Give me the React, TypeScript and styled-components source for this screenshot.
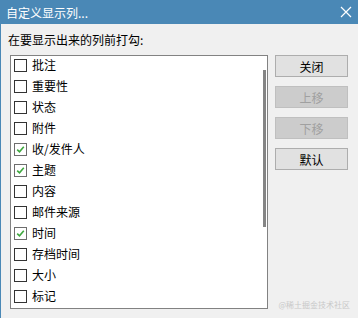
import React from "react";
import styled, { createGlobalStyle } from "styled-components";

const GlobalStyle = createGlobalStyle`
  html, body {
    margin: 0;
    padding: 0;
    background: #f0f0f0;
  }
  body {
    font-family: "Noto Sans CJK SC", "Noto Sans", "Liberation Sans", sans-serif;
    font-size: 12px;
  }
`;

const Window = styled.div`
  width: 358px;
  height: 318px;
  display: flex;
  flex-direction: column;
  background: #f0f0f0;
  overflow: hidden;
`;

const TitleBar = styled.div`
  height: 24px;
  flex: none;
  background: #4a88b6;
  color: #fff;
  display: flex;
  align-items: center;
  justify-content: space-between;
  padding: 0 6px 0 6px;
  font-size: 12px;
`;

const CloseIcon = styled.svg`
  width: 12px;
  height: 12px;
`;

const Body = styled.div`
  flex: 1;
  border-left: 1px solid #4a88b6;
  display: flex;
  flex-direction: column;
  position: relative;
`;

const Prompt = styled.div`
  margin: 8px 0 0 7px;
  height: 16px;
  line-height: 16px;
  color: #000;
`;

const Content = styled.div`
  display: flex;
  margin: 7px 0 0 9px;
  gap: 7px;
`;

const ListBox = styled.div`
  width: 258px;
  height: 254px;
  box-sizing: border-box;
  border: 1px solid #828282;
  background: #fff;
  display: flex;
`;

const Rows = styled.div`
  flex: 1;
  display: flex;
  flex-direction: column;
`;

const Row = styled.div`
  height: 21px;
  box-sizing: border-box;
  padding: 0 0 3px 3px;
  display: flex;
  align-items: center;
  gap: 5px;
  color: #000;
  line-height: 1;
`;

const Box = styled.span<{ $checked?: boolean }>`
  width: 13px;
  height: 13px;
  box-sizing: border-box;
  border: 1px solid ${(p) => (p.$checked ? "#6d6d6d" : "#333")};
  background: #fff;
  display: flex;
  align-items: center;
  justify-content: center;
  flex: none;
`;

const Track = styled.div`
  width: 3px;
  margin-right: 1px;
  padding-top: 14px;
`;

const Thumb = styled.div`
  width: 3px;
  height: 157px;
  background: #858585;
`;

const Buttons = styled.div`
  display: flex;
  flex-direction: column;
  gap: 9px;
`;

const Button = styled.button<{ disabled?: boolean }>`
  width: 73px;
  height: 22px;
  box-sizing: border-box;
  margin: 0;
  padding: 0;
  font: inherit;
  font-size: 12px;
  border: 1px solid ${(p) => (p.disabled ? "#bfbfbf" : "#adadad")};
  background: ${(p) => (p.disabled ? "#cccccc" : "#e1e1e1")};
  color: ${(p) => (p.disabled ? "#a0a0a0" : "#000")};
`;

const Watermark = styled.div`
  position: absolute;
  right: 8px;
  bottom: 8px;
  font-size: 8px;
  color: #c8c8c8;
`;

const Check = () => (
  <svg width="9" height="9" viewBox="0 0 9 9">
    <path d="M1.2 4.6 L3.5 6.8 L7.8 1.8" fill="none" stroke="#3ea83e" strokeWidth="1.6" />
  </svg>
);

const columns: { label: string; checked: boolean }[] = [
  { label: "批注", checked: false },
  { label: "重要性", checked: false },
  { label: "状态", checked: false },
  { label: "附件", checked: false },
  { label: "收/发件人", checked: true },
  { label: "主题", checked: true },
  { label: "内容", checked: false },
  { label: "邮件来源", checked: false },
  { label: "时间", checked: true },
  { label: "存档时间", checked: false },
  { label: "大小", checked: false },
  { label: "标记", checked: false },
];

export default function App() {
  return (
    <>
      <GlobalStyle />
      <Window>
        <TitleBar>
          <span>自定义显示列...</span>
          <CloseIcon viewBox="0 0 12 12">
            <path d="M1 1 L11 11 M11 1 L1 11" stroke="#fff" strokeWidth="1.2" />
          </CloseIcon>
        </TitleBar>
        <Body>
          <Prompt>在要显示出来的列前打勾:</Prompt>
          <Content>
            <ListBox>
              <Rows>
                {columns.map((c) => (
                  <Row key={c.label}>
                    <Box $checked={c.checked}>{c.checked && <Check />}</Box>
                    <span>{c.label}</span>
                  </Row>
                ))}
              </Rows>
              <Track>
                <Thumb />
              </Track>
            </ListBox>
            <Buttons>
              <Button>关闭</Button>
              <Button disabled>上移</Button>
              <Button disabled>下移</Button>
              <Button>默认</Button>
            </Buttons>
          </Content>
          <Watermark>@稀土掘金技术社区</Watermark>
        </Body>
      </Window>
    </>
  );
}
